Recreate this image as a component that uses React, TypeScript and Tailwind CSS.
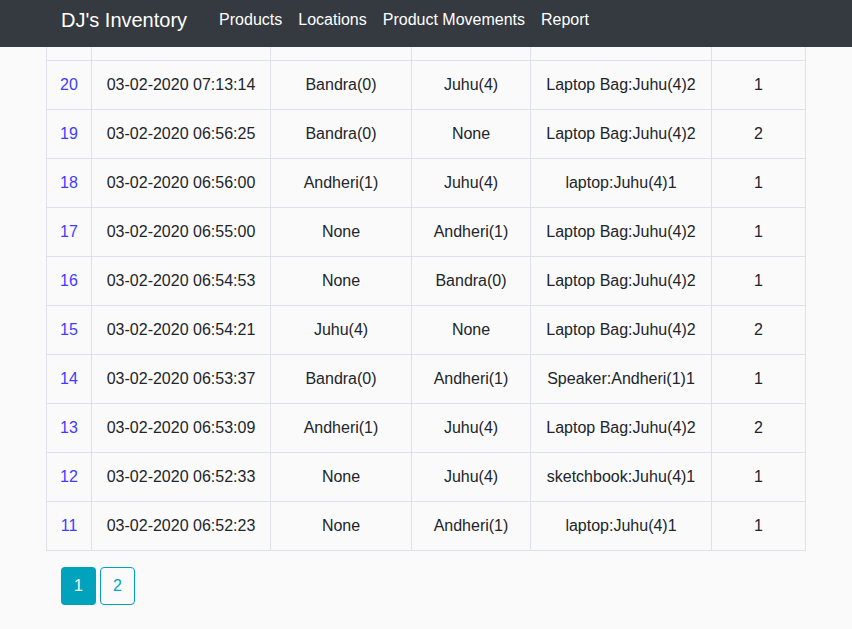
import React from "react";

const rows = [
  ["20", "03-02-2020 07:13:14", "Bandra(0)", "Juhu(4)", "Laptop Bag:Juhu(4)2", "1"],
  ["19", "03-02-2020 06:56:25", "Bandra(0)", "None", "Laptop Bag:Juhu(4)2", "2"],
  ["18", "03-02-2020 06:56:00", "Andheri(1)", "Juhu(4)", "laptop:Juhu(4)1", "1"],
  ["17", "03-02-2020 06:55:00", "None", "Andheri(1)", "Laptop Bag:Juhu(4)2", "1"],
  ["16", "03-02-2020 06:54:53", "None", "Bandra(0)", "Laptop Bag:Juhu(4)2", "1"],
  ["15", "03-02-2020 06:54:21", "Juhu(4)", "None", "Laptop Bag:Juhu(4)2", "2"],
  ["14", "03-02-2020 06:53:37", "Bandra(0)", "Andheri(1)", "Speaker:Andheri(1)1", "1"],
  ["13", "03-02-2020 06:53:09", "Andheri(1)", "Juhu(4)", "Laptop Bag:Juhu(4)2", "2"],
  ["12", "03-02-2020 06:52:33", "None", "Juhu(4)", "sketchbook:Juhu(4)1", "1"],
  ["11", "03-02-2020 06:52:23", "None", "Andheri(1)", "laptop:Juhu(4)1", "1"],
];

const widths = ["w-[45px]", "w-[179px]", "w-[141px]", "w-[119px]", "w-[181px]", "w-[94px]"];

export default function App() {
  return (
    <div className="min-h-[629px] bg-[#fafafa] text-[#212529] font-['Liberation_Sans',Arial,sans-serif]">
      <nav className="h-[47px] bg-[#343a40] flex items-center pl-[61px]">
        <span className="text-white text-[20px] leading-none mr-[32px] -mt-[8px]">DJ's Inventory</span>
        <div className="flex gap-[16px] text-white text-[16px] leading-none -mt-[7px]">
          <span>Products</span>
          <span>Locations</span>
          <span>Product Movements</span>
          <span>Report</span>
        </div>
      </nav>
      <div className="pl-[46px]">
        <table className="border-collapse w-[760px] table-fixed text-[16px]">
          <colgroup>
            {widths.map((w, i) => (
              <col key={i} className={w} />
            ))}
          </colgroup>
          <tbody>
            <tr className="h-[13px]">
              {widths.map((_, i) => (
                <td key={i} className="border-x border-b border-[#dee2e6] p-0"></td>
              ))}
            </tr>
            {rows.map((r) => (
              <tr key={r[0]} className="h-[49px]">
                {r.map((c, i) => (
                  <td
                    key={i}
                    className={`border border-[#dee2e6] p-0 text-center align-middle ${i === 0 ? "text-[#3d3dff]" : ""}`}
                  >
                    {c}
                  </td>
                ))}
              </tr>
            ))}
          </tbody>
        </table>
      </div>
      <div className="pl-[61px] pt-[16px] flex gap-[4px]">
        <div className="w-[35px] h-[38px] rounded-[4px] bg-[#00a3bb] text-white flex items-center justify-center text-[16px]">1</div>
        <div className="w-[35px] h-[38px] rounded-[4px] border border-[#00a3bb] text-[#00a3bb] flex items-center justify-center text-[16px]">2</div>
      </div>
    </div>
  );
}
